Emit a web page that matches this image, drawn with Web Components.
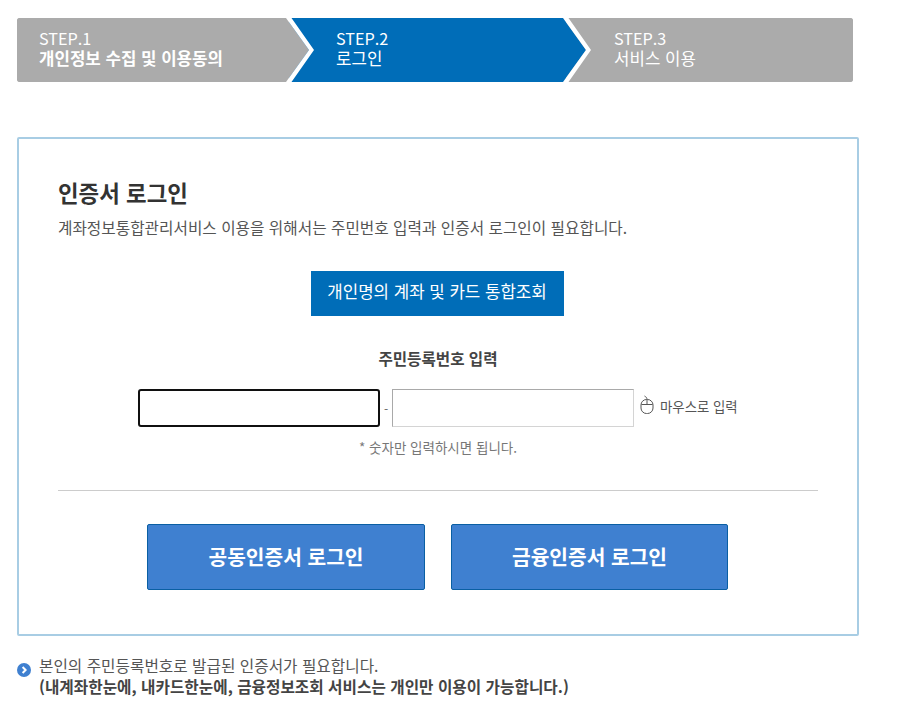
<!DOCTYPE html>
<html lang="ko">
<head>
<meta charset="utf-8">
<title>인증서 로그인</title>
<style>
  html, body { margin: 0; background: #fff; }
  body { font-family: "Noto Sans CJK KR", "Noto Sans", sans-serif; color: #333; }
  login-page { display: block; }
</style>
</head>
<body>
<login-page>
  <step-bar>
    <step-item num="STEP.1" strong style="width:272px;z-index:3">개인정보 수집 및 이용동의</step-item>
    <step-item num="STEP.2" active style="width:277px;z-index:2">로그인</step-item>
    <step-item num="STEP.3" last>서비스 이용</step-item>
  </step-bar>
  <login-card>
    <rrn-form></rrn-form>
  </login-card>
  <notice-line>
    본인의 주민등록번호로 발급된 인증서가 필요합니다.
    <b slot="strong">(내계좌한눈에, 내카드한눈에, 금융정보조회 서비스는 개인만 이용이 가능합니다.)</b>
  </notice-line>
</login-page>

<script>
class LoginPage extends HTMLElement {
    connectedCallback() {
        const shadowDom = this.attachShadow({ mode: "open" });
        shadowDom.innerHTML = `
            <style>
                :host { display: block; width: 912px; height: 727px; box-sizing: border-box; padding: 18px 0 0 17px; overflow: hidden; }
            </style>
            <slot></slot>
        `;
    }
}

class StepBar extends HTMLElement {
    connectedCallback() {
        const shadowDom = this.attachShadow({ mode: "open" });
        shadowDom.innerHTML = `
            <style>
                :host {
                    display: flex;
                    width: 836px;
                    height: 64px;
                    border-radius: 3px;
                    overflow: hidden;
                    background: #ababab;
                }
            </style>
            <slot></slot>
        `;
    }
}

class StepItem extends HTMLElement {
    connectedCallback() {
        const shadowDom = this.attachShadow({ mode: "open" });
        const isActive = this.hasAttribute("active");
        const isLast = this.hasAttribute("last");
        const fill = isActive ? "#006db8" : "#ababab";
        // the arrow tip lies over the next step
        const arrow = isLast ? "" : `
            <svg class="arrow" width="30" height="64" viewBox="0 0 30 64">
                <path d="M0 0H1L24 32L1 64H0Z" fill="${fill}"/>
                <path d="M1 0H6.5L29 32L6.5 64H1L24 32Z" fill="#fff"/>
            </svg>`;
        shadowDom.innerHTML = `
            <style>
                :host {
                    display: block;
                    position: relative;
                    box-sizing: border-box;
                    flex: none;
                    height: 64px;
                    padding: 10px 0 0 47px;
                    background: ${fill};
                    color: #fff;
                    font-size: 16.8px;
                    line-height: 20px;
                }
                :host([strong]) { padding-left: 22px; }
                :host([last]) { flex: 1; padding-left: 48px; }
                :host([strong]) .label { font-weight: 700; }
                .num { display: block; font-size: 16.2px; }
                .label { display: block; white-space: nowrap; }
                .arrow { position: absolute; right: -26px; top: 0; z-index: 1; }
            </style>
            <span class="num">${this.getAttribute("num")}</span>
            <span class="label"><slot></slot></span>
            ${arrow}
        `;
    }
}

class LoginCard extends HTMLElement {
    connectedCallback() {
        const shadowDom = this.attachShadow({ mode: "open" });
        shadowDom.innerHTML = `
            <style>
                :host {
                    display: block;
                    box-sizing: border-box;
                    width: 842px;
                    height: 499px;
                    margin-top: 55px;
                    padding: 38px 39px 0;
                    border: 2px solid #a8cde4;
                    border-radius: 2px;
                }
                h2 { margin: 0; font-size: 22.4px; line-height: 30px; font-weight: 700; color: #333; }
                p { margin: 10px 0 0; font-size: 15.7px; line-height: 22px; color: #555; white-space: nowrap; }
            </style>
            <h2>인증서 로그인</h2>
            <p>계좌정보통합관리서비스 이용을 위해서는 주민번호 입력과 인증서 로그인이 필요합니다.</p>
            <slot></slot>
        `;
    }
}

class RrnForm extends HTMLElement {
    connectedCallback() {
        const shadowDom = this.attachShadow({ mode: "open" });
        shadowDom.innerHTML = `
            <style>
                :host { display: flex; flex-direction: column; align-items: center; width: 760px; padding-top: 32px; }
                .search {
                    box-sizing: border-box;
                    width: 253px;
                    height: 45px;
                    margin-right: 2px;
                    border: 0;
                    background: #006db8;
                    color: #fff;
                    font: 400 16.8px/40px "Noto Sans CJK KR", sans-serif;
                    padding: 0 0 5px;
                }
                .title { margin-top: 31px; font-size: 15.6px; line-height: 22px; font-weight: 700; color: #444; }
                .fields { display: flex; align-items: center; align-self: flex-start; height: 38px; margin: 20px 0 0 80px; }
                input {
                    box-sizing: border-box;
                    width: 242px;
                    height: 38px;
                    padding: 0 6px;
                    background: #fff;
                    border: 1px solid #d4d4d4;
                    border-top-color: #a9a9a9;
                    border-left-color: #a9a9a9;
                    outline: none;
                }
                input.focus { border: 2px solid #101010; border-radius: 3px; }
                .dash { width: 12px; text-align: center; font-size: 12px; color: #666; }
                .mouse {
                    display: flex;
                    align-items: center;
                    gap: 6px;
                    margin: 0 0 4px 6px;
                    white-space: nowrap;
                    font-size: 13.4px;
                    color: #555;
                }
                .mouse svg { margin-bottom: 3px; }
                .hint { margin-top: 8px; font-size: 13.5px; line-height: 24px; color: #777; }
                hr { width: 760px; height: 1px; margin: 31px 0 33px; border: 0; background: #ccc; }
                .certs { display: flex; gap: 26px; margin-right: 1px; }
                .cert {
                    box-sizing: border-box;
                    width: 278px;
                    height: 66px;
                    padding: 0 0 2px;
                    border: 1px solid #0a5fa3;
                    border-radius: 2px;
                    background: #3f80d0;
                    color: #fff;
                    font: 700 20.3px/60px "Noto Sans CJK KR", sans-serif;
                }
                .cert + .cert { width: 277px; }
            </style>
            <button class="search">개인명의 계좌 및 카드 통합조회</button>
            <div class="title">주민등록번호 입력</div>
            <div class="fields">
                <input class="focus" type="text" aria-label="주민등록번호 앞자리">
                <span class="dash">-</span>
                <input type="text" aria-label="주민등록번호 뒷자리">
                <span class="mouse">
                    <svg width="14" height="20" viewBox="0 0 14 20" fill="none" stroke="#555" stroke-width="1">
                        <rect x="1" y="4.5" width="12" height="14" rx="5.5"/>
                        <path d="M1.5 9.5H12.5M7 4.5V9.5M7 4.5C7 2.5 6 2 4.5 1"/>
                    </svg>
                    마우스로 입력
                </span>
            </div>
            <div class="hint">* 숫자만 입력하시면 됩니다.</div>
            <hr>
            <div class="certs">
                <button class="cert">공동인증서 로그인</button>
                <button class="cert">금융인증서 로그인</button>
            </div>
        `;
    }
}

class NoticeLine extends HTMLElement {
    connectedCallback() {
        const shadowDom = this.attachShadow({ mode: "open" });
        shadowDom.innerHTML = `
            <style>
                :host {
                    display: flex;
                    gap: 8px;
                    margin-top: 19px;
                    font-size: 15.7px;
                    line-height: 21px;
                    color: #555;
                    white-space: nowrap;
                }
                svg { flex: none; margin-top: 8px; }
                .strong { display: block; color: #444; }
                ::slotted(b) { font-weight: 700; }
            </style>
            <svg width="14" height="14" viewBox="0 0 14 14">
                <circle cx="7" cy="7" r="7" fill="#3f80d0"/>
                <path d="M5.6 4L8.6 7L5.6 10" fill="none" stroke="#fff" stroke-width="2"/>
            </svg>
            <div>
                <slot></slot>
                <span class="strong"><slot name="strong"></slot></span>
            </div>
        `;
    }
}

customElements.define("login-page", LoginPage);
customElements.define("step-bar", StepBar);
customElements.define("step-item", StepItem);
customElements.define("login-card", LoginCard);
customElements.define("rrn-form", RrnForm);
customElements.define("notice-line", NoticeLine);
</script>
</body>
</html>
